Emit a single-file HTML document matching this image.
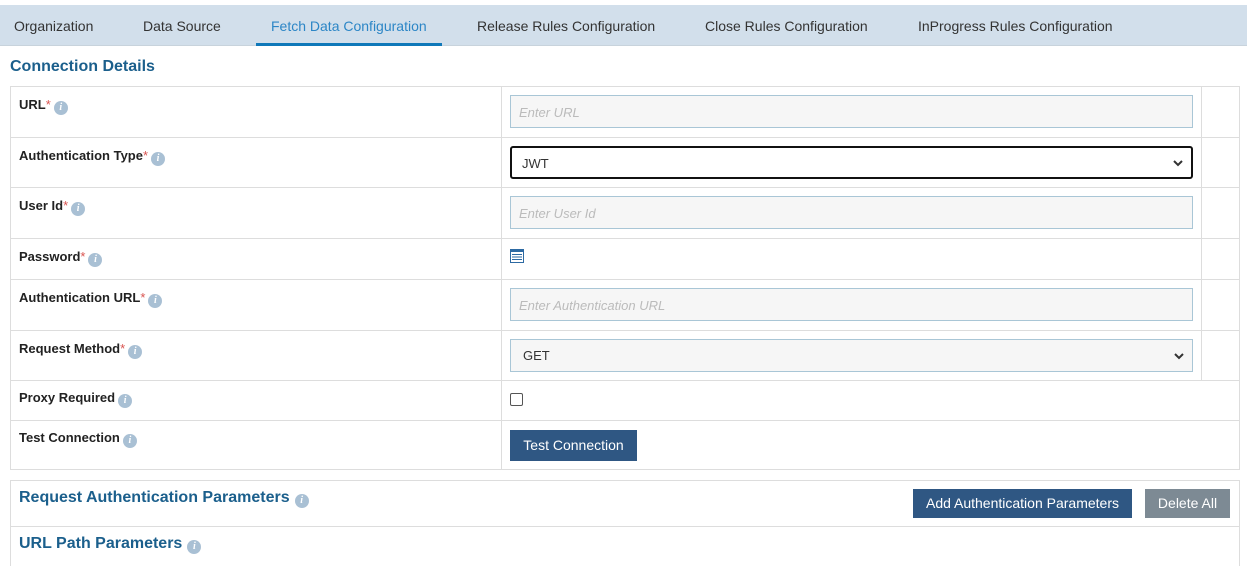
<!DOCTYPE html>
<html style="overflow:hidden;height:566px"><head><style>
*{box-sizing:border-box;margin:0;padding:0}
body{width:1247px;height:566px;overflow:hidden;background:#fff;font-family:"Liberation Sans",Arial,sans-serif;position:relative}
.a{position:absolute}
.tabs{left:0;top:5px;width:1247px;height:41px;background:#d2dfeb;border-bottom:1px solid #c8d3dc}
.tab{position:absolute;top:13px;font-size:14px;color:#333}
.lbl{position:absolute;left:19px;font-size:13px;font-weight:bold;color:#222}
.lbl b{color:#d9534f;font-weight:normal}
.i{display:inline-block;width:14px;height:14px;border-radius:50%;background:#a9c0d4;color:#fff;font-size:10px;font-style:italic;font-family:"Liberation Serif",serif;text-align:center;line-height:14px;vertical-align:-1px;margin-left:3px;font-weight:bold}
.inp{position:absolute;left:510px;width:683px;height:33px;background:#f6f6f6;border:1px solid #a9c6d6;font-size:13px;font-style:italic;color:#bbb;padding:9px 8px}
.hl{position:absolute;height:1px;background:#ddd}
.vl{position:absolute;width:1px;background:#ddd}
.btn{position:absolute;color:#fff;font-size:14px;text-align:center;line-height:29px}
</style></head><body>
<div class="a tabs">
<span class="tab" style="left:14px">Organization</span>
<span class="tab" style="left:143px">Data Source</span>
<span class="tab" style="left:271px;color:#2c86c6">Fetch Data Configuration</span>
<span class="tab" style="left:477px">Release Rules Configuration</span>
<span class="tab" style="left:705px">Close Rules Configuration</span>
<span class="tab" style="left:918px">InProgress Rules Configuration</span>
<div class="a" style="left:256px;top:38px;width:186px;height:3px;background:#0f78b9"></div>
</div>
<div class="a" style="left:10px;top:58px;font-size:16px;font-weight:bold;color:#1b5f8c">Connection Details</div>
<div class="a" style="left:10px;top:86px;width:1230px;height:384px;border:1px solid #ddd"></div>
<div class="hl" style="left:10px;width:1230px;top:137px"></div>
<div class="hl" style="left:10px;width:1230px;top:187px"></div>
<div class="hl" style="left:10px;width:1230px;top:238px"></div>
<div class="hl" style="left:10px;width:1230px;top:279px"></div>
<div class="hl" style="left:10px;width:1230px;top:330px"></div>
<div class="hl" style="left:10px;width:1230px;top:380px"></div>
<div class="hl" style="left:10px;width:1230px;top:420px"></div>
<div class="vl" style="left:501px;top:86px;height:384px"></div>
<div class="vl" style="left:1201px;top:86px;height:294px"></div>
<div class="lbl" style="top:97px">URL<b>*</b><span class="i">i</span></div>
<div class="lbl" style="top:148px">Authentication Type<b>*</b><span class="i">i</span></div>
<div class="lbl" style="top:198px">User Id<b>*</b><span class="i">i</span></div>
<div class="lbl" style="top:249px">Password<b>*</b><span class="i">i</span></div>
<div class="lbl" style="top:290px">Authentication URL<b>*</b><span class="i">i</span></div>
<div class="lbl" style="top:341px">Request Method<b>*</b><span class="i">i</span></div>
<div class="lbl" style="top:390px">Proxy Required<span class="i">i</span></div>
<div class="lbl" style="top:430px">Test Connection<span class="i">i</span></div>
<div class="inp" style="top:95px">Enter URL</div>
<div class="inp" style="top:146px;height:33px;background:#fff;border:2px solid #111;border-radius:3px;font-style:normal;color:#333;padding:8px 10px">JWT<svg class="a" style="right:8px;top:12px" width="10" height="7" viewBox="0 0 10 7"><path d="M1 1l4 4 4-4" stroke="#333" stroke-width="2" fill="none"/></svg></div>
<div class="inp" style="top:196px">Enter User Id</div>
<svg class="a" style="left:510px;top:249px" width="14" height="14" viewBox="0 0 14 14"><rect x="0.5" y="0.5" width="13" height="13" fill="#fff" stroke="#2d6aa3"/><rect x="0" y="0" width="14" height="3" fill="#2d6aa3"/><path d="M2 5.5h10M2 8h10M2 10.5h10" stroke="#2d6aa3"/></svg>
<div class="inp" style="top:288px">Enter Authentication URL</div>
<div class="inp" style="top:339px;font-style:normal;color:#333;padding:8px 12px">GET<svg class="a" style="right:8px;top:13px" width="10" height="7" viewBox="0 0 10 7"><path d="M1 1l4 4 4-4" stroke="#333" stroke-width="2" fill="none"/></svg></div>
<div class="a" style="left:510px;top:393px;width:13px;height:13px;border:1px solid #555;border-radius:2px;background:#fff"></div>
<div class="btn" style="left:510px;top:430px;width:127px;height:31px;line-height:31px;background:#2f5783">Test Connection</div>
<div class="a" style="left:10px;top:480px;width:1230px;height:90px;border:1px solid #ddd;border-bottom:none"></div>
<div class="hl" style="left:10px;width:1230px;top:526px"></div>
<div class="a" style="left:19px;top:489px;font-size:16px;font-weight:bold;color:#1b5f8c">Request Authentication Parameters<span class="i" style="margin-left:5px">i</span></div>
<div class="btn" style="left:913px;top:489px;width:219px;background:#2f5783">Add Authentication Parameters</div>
<div class="btn" style="left:1145px;top:489px;width:85px;background:#7d8a94">Delete All</div>
<div class="a" style="left:19px;top:535px;font-size:16px;font-weight:bold;color:#1b5f8c">URL Path Parameters<span class="i" style="margin-left:5px">i</span></div>
</body></html>
